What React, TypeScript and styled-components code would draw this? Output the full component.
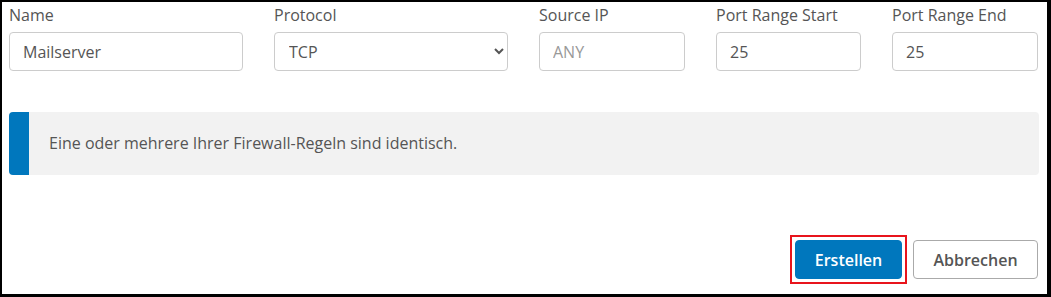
import React from "react";
import styled, { createGlobalStyle } from "styled-components";

const Global = createGlobalStyle`
  html, body { margin: 0; padding: 0; background: #fff; }
  body { font-family: "Open Sans", "Noto Sans", sans-serif; }
  * { box-sizing: border-box; }
`;

const Frame = styled.div`
  width: 1051px;
  height: 297px;
  border-style: solid;
  border-color: #000;
  border-width: 2px 4px 3px 2px;
  padding: 2px 0 0 7px;
  display: flex;
  flex-direction: column;
`;

const FieldRow = styled.div`
  display: flex;
  gap: 31px;
`;

const Field = styled.div<{ $w: number }>`
  width: ${(p) => p.$w}px;
  display: flex;
  flex-direction: column;
`;

const Label = styled.label`
  font-size: 16px;
  line-height: 22px;
  color: #555;
  margin-bottom: 6px;
`;

const inputBase = `
  height: 39px;
  width: 100%;
  border: 1px solid #ccc;
  border-radius: 4px;
  font-family: "Open Sans", "Noto Sans", sans-serif;
  font-size: 16px;
  color: #555;
  background: #fff;
  outline: none;
`;

const Input = styled.input`
  ${inputBase}
  padding: 0 13px;
  &::placeholder { color: #999; }
`;

const Select = styled.select`
  ${inputBase}
  padding: 0 10px;
`;

const Alert = styled.div`
  margin-top: 41px;
  width: 1030px;
  height: 63px;
  background: #f2f2f2;
  border-left: 20px solid #0077bd;
  border-radius: 4px;
  display: flex;
  align-items: center;
  padding-left: 20px;
  padding-bottom: 1px;
  font-size: 16px;
  color: #555;
`;

const Actions = styled.div`
  margin-top: 60px;
  width: 1029px;
  display: flex;
  justify-content: flex-end;
  align-items: center;
  gap: 6px;
`;

const Highlight = styled.span`
  border: 2px solid #e8141c;
  padding: 3px;
  display: inline-flex;
`;

const Button = styled.button<{ $primary?: boolean }>`
  height: 39px;
  padding: 0;
  border-radius: 4px;
  font-family: "Open Sans", "Noto Sans", sans-serif;
  font-size: 16px;
  font-weight: 600;
  cursor: pointer;
  border: 1px solid ${(p) => (p.$primary ? "#0077bd" : "#aaa")};
  background: ${(p) => (p.$primary ? "#0077bd" : "#fff")};
  color: ${(p) => (p.$primary ? "#fff" : "#555")};
  width: ${(p) => (p.$primary ? 107 : 125)}px;
`;

export default function App() {
  return (
    <>
      <Global />
      <Frame>
        <FieldRow>
          <Field $w={234}>
            <Label>Name</Label>
            <Input defaultValue="Mailserver" />
          </Field>
          <Field $w={234}>
            <Label>Protocol</Label>
            <Select defaultValue="TCP">
              <option>TCP</option>
              <option>UDP</option>
            </Select>
          </Field>
          <Field $w={146}>
            <Label>Source IP</Label>
            <Input placeholder="ANY" />
          </Field>
          <Field $w={145}>
            <Label>Port Range Start</Label>
            <Input defaultValue="25" />
          </Field>
          <Field $w={146}>
            <Label>Port Range End</Label>
            <Input defaultValue="25" />
          </Field>
        </FieldRow>
        <Alert>Eine oder mehrere Ihrer Firewall-Regeln sind identisch.</Alert>
        <Actions>
          <Highlight>
            <Button $primary>Erstellen</Button>
          </Highlight>
          <Button>Abbrechen</Button>
        </Actions>
      </Frame>
    </>
  );
}
